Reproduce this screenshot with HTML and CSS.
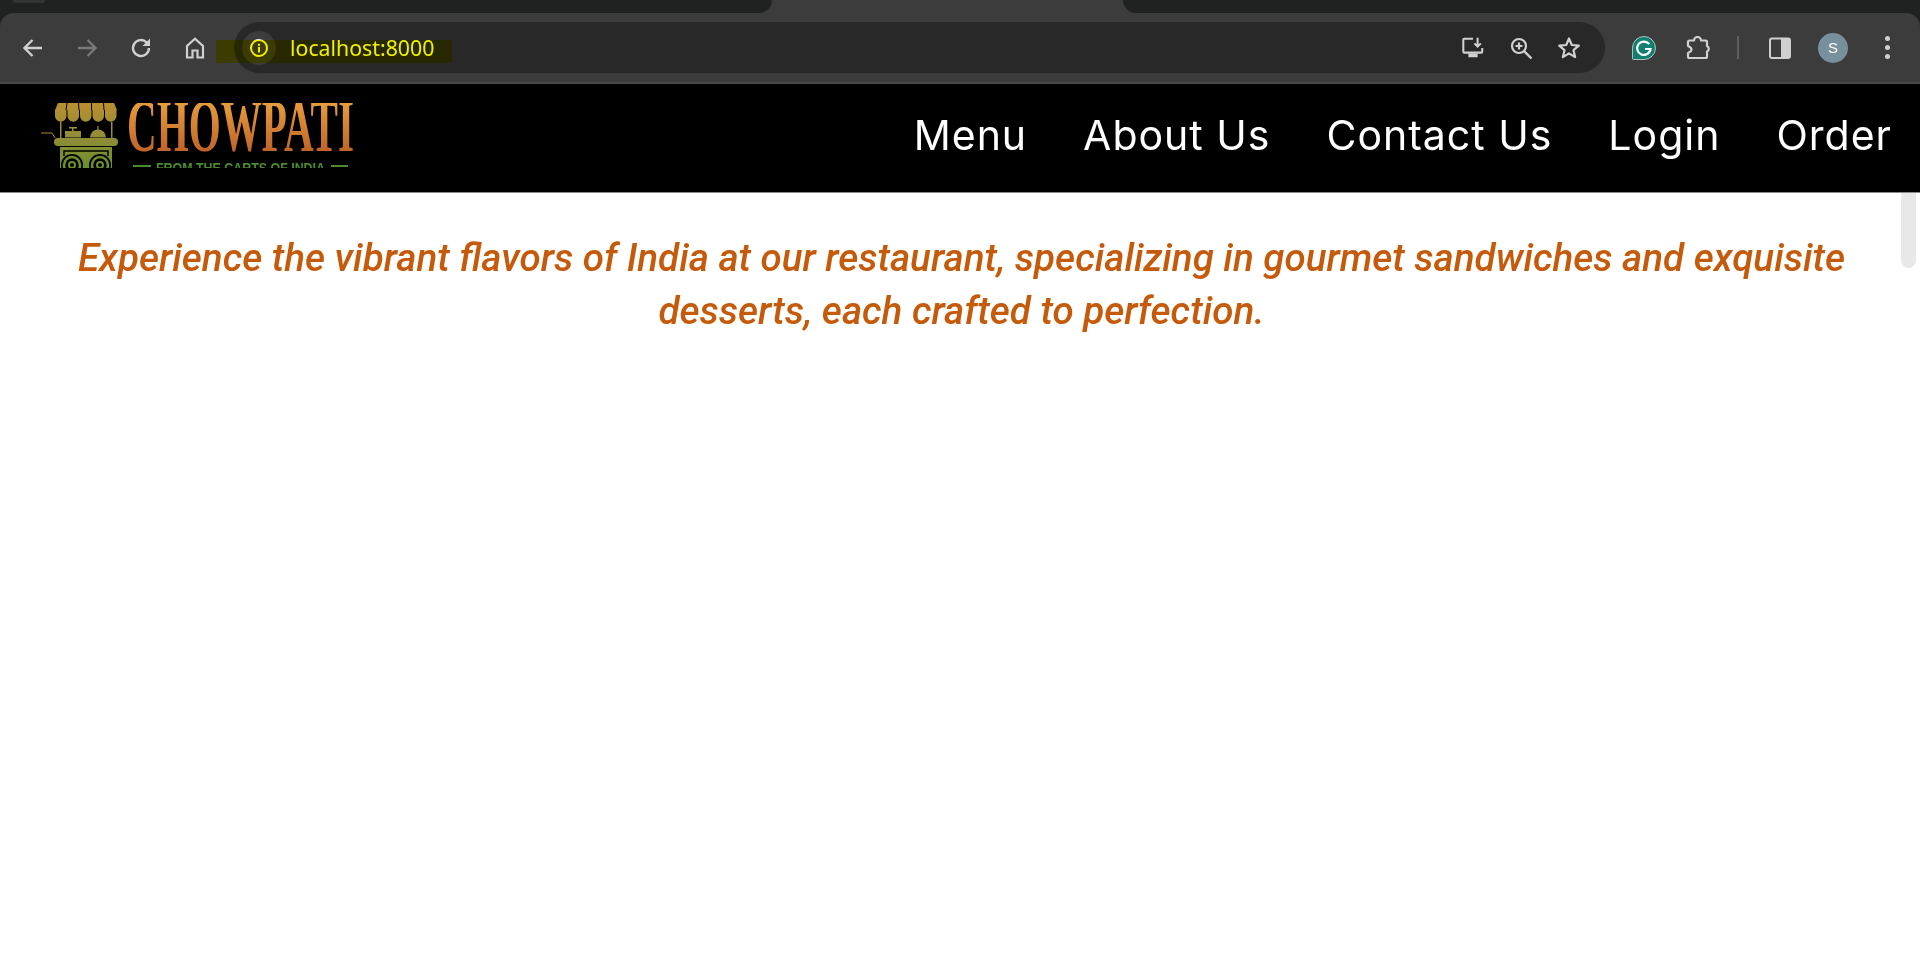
FILE: index.html
```html
<!DOCTYPE html>
<html lang="en">
<head>
    <meta charset="UTF-8">
    <title>Chowpati</title>
    <link rel="stylesheet" href="styles.css">
</head>
<body>
    <div class="browser">
        <div class="tabstrip">
            <div class="tab-left"><span class="tab-ghost"></span></div>
            <div class="tab-right"></div>
        </div>
        <div class="toolbar">
            <div class="nav-buttons">
                <svg class="icon" viewBox="0 0 24 24"><path d="M21 12H4M11.500 4L3.500 12l8 8" fill="none" stroke="#d0d0d0" stroke-width="2.400"/></svg>
                <svg class="icon" viewBox="0 0 24 24"><path d="M3 12h17M12.500 4l8 8-8 8" fill="none" stroke="#797979" stroke-width="2.400"/></svg>
                <svg class="icon" viewBox="0 0 24 24"><path d="M20 12a8 8 0 1 1-2.400-5.700L20 8.700" fill="none" stroke="#d0d0d0" stroke-width="2.400"/><path d="M21 2.500V10h-7.500z" fill="#d0d0d0"/></svg>
                <svg class="icon" viewBox="0 0 24 24"><path d="M4 21.500V10L12 2.800 20 10v11.500h-5.500v-7h-5v7z" fill="none" stroke="#d0d0d0" stroke-width="2.200"/></svg>
            </div>
            <div class="urlbar">
                <div class="chip">
                    <svg class="info" viewBox="0 0 20 20"><circle cx="10" cy="10" r="8" fill="none" stroke="#f0f0f0" stroke-width="2"/><rect x="9" y="9" width="2" height="5.500" fill="#f0f0f0"/><rect x="9" y="5.800" width="2" height="2" fill="#f0f0f0"/></svg>
                </div>
                <span class="url">localhost:8000</span>
                <div class="url-actions">
                    <svg class="icon" viewBox="0 0 26 26"><path d="M13 3H3.500a1 1 0 0 0-1 1v13a1 1 0 0 0 1 1H22a1 1 0 0 0 1-1v-4" fill="none" stroke="#d0d0d0" stroke-width="2.200"/><path d="M18 2v9M14.500 8l3.500 3.500L21.500 8" fill="none" stroke="#d0d0d0" stroke-width="2.200"/><rect x="8" y="19" width="10" height="4" fill="#d0d0d0"/></svg>
                    <svg class="icon" viewBox="0 0 24 24"><circle cx="10" cy="10" r="7" fill="none" stroke="#d0d0d0" stroke-width="2.200"/><path d="M15 15l7.500 7.500" stroke="#d0d0d0" stroke-width="2.400"/><path d="M6.500 10h7M10 6.500v7" stroke="#d0d0d0" stroke-width="2.200"/></svg>
                    <svg class="icon" viewBox="0 0 24 24"><path d="M12 2.500l2.800 6.500 7 .6-5.300 4.600 1.600 6.900-6.100-3.700-6.100 3.700 1.600-6.900-5.300-4.600 7-.6z" fill="none" stroke="#d0d0d0" stroke-width="2.200" stroke-linejoin="round"/></svg>
                </div>
            </div>
            <div class="extensions">
                <svg class="icon grammarly" viewBox="0 0 24 24"><path d="M12 .5a11.500 11.500 0 1 1 0 23H1.500a1 1 0 0 1-1-1V12A11.500 11.500 0 0 1 12 .5z" fill="#0f7f6f" stroke="#d8d8d8" stroke-width=".8"/><path d="M17.200 8.200A6.700 6.700 0 1 0 18.500 13h-5.500" fill="none" stroke="#fff" stroke-width="2.200"/></svg>
                <svg class="icon puzzle" viewBox="0 0 24 24"><path d="M2 6a1.500 1.500 0 0 1 1.500-1.500H8a3.500 3.500 0 0 1 7 0h4.500A1.500 1.500 0 0 1 21 6v4a3 3 0 0 1 0 5.500v5a1.500 1.500 0 0 1-1.500 1.500h-16A1.500 1.500 0 0 1 2 20.500V17q3.500-1.500 3.500-3.500T2 10z" fill="none" stroke="#d0d0d0" stroke-width="2.200" stroke-linejoin="round"/></svg>
                <span class="divider"></span>
                <svg class="icon panel" viewBox="0 0 24 24"><rect x="2" y="2.500" width="20" height="19.500" rx="2" fill="none" stroke="#d0d0d0" stroke-width="2"/><rect x="13" y="2.500" width="9" height="19.500" fill="#d0d0d0"/></svg>
                <span class="avatar">S</span>
                <span class="dots"><i></i><i></i><i></i></span>
            </div>
            <div class="highlight"></div>
        </div>
    </div>

    <header class="site-header">
        <svg class="logo" viewBox="0 0 316 65">
            <defs>
                <linearGradient id="cartfill" gradientUnits="userSpaceOnUse" x1="0" y1="0" x2="0" y2="65">
                    <stop offset="0" stop-color="#b98f30"/>
                    <stop offset="0.55" stop-color="#8f8c38"/>
                    <stop offset="1" stop-color="#6c8f2c"/>
                </linearGradient>
                <linearGradient id="namefill" gradientUnits="userSpaceOnUse" x1="0" y1="0" x2="0" y2="49">
                    <stop offset="0" stop-color="#e69c3c"/>
                    <stop offset="1" stop-color="#bf6329"/>
                </linearGradient>
            </defs>
            <g fill="url(#cartfill)">
                <path d="M18 0h56l3 7H15z"/>
                <path d="M15 7h11.500v6a5.750 5.750 0 0 1-11.500 0zM27.500 7H39v6a5.750 5.750 0 0 1-11.500 0zM40 7h11.500v6a5.750 5.750 0 0 1-11.500 0zM52.500 7H64v6a5.750 5.750 0 0 1-11.500 0zM65 7h11.500v6a5.750 5.750 0 0 1-11.500 0z"/>
                <rect x="20" y="19" width="1.500" height="17"/>
                <rect x="71" y="19" width="1.500" height="17"/>
                <rect x="25" y="28" width="16" height="6.500"/>
                <rect x="29" y="24" width="8" height="1.500"/>
                <rect x="32" y="24" width="1.500" height="5"/>
                <path d="M50 34.500a8 8 0 0 1 16 0z"/>
                <rect x="57.300" y="23" width="1.200" height="4"/>
                <rect x="14" y="35" width="64" height="8" rx="4"/>
                <rect x="20" y="44" width="52" height="21"/>
            </g>
            <path d="M26 7L27 0M39 7L38.500 0M51.500 7L51.500 0M64 7L63.500 0" stroke="#000" stroke-width="1"/>
            <path d="M1 30h11l3 5" fill="none" stroke="#a58b35" stroke-width="1"/>
            <path d="M24 53v-5h44v5" fill="none" stroke="#000" stroke-width="1.500"/>
            <circle cx="32" cy="62" r="11" fill="#000"/>
            <circle cx="60" cy="62" r="11" fill="#000"/>
            <g fill="none" stroke="#6f8f2d">
                <circle cx="32" cy="62" r="8" stroke-width="2.500"/>
                <circle cx="60" cy="62" r="8" stroke-width="2.500"/>
                <circle cx="32" cy="62" r="3" stroke-width="2"/>
                <circle cx="60" cy="62" r="3" stroke-width="2"/>
            </g>
            <text class="brand-name" x="87" y="48" fill="url(#namefill)" textLength="227" lengthAdjust="spacingAndGlyphs">CHOWPATI</text>
            <rect x="93" y="62" width="18" height="2" fill="#4c8b2b"/>
            <rect x="291" y="62" width="17" height="2" fill="#4c8b2b"/>
            <text class="tagline" x="116" y="70" textLength="169" lengthAdjust="spacingAndGlyphs">FROM THE CARTS OF INDIA</text>
        </svg>
        <nav class="site-nav">
            <a href="#">Menu</a>
            <a href="#">About Us</a>
            <a href="#">Contact Us</a>
            <a href="#">Login</a>
            <a href="#">Order</a>
        </nav>
    </header>

    <div class="page">
        <main class="content">
            <p class="intro">Experience the vibrant flavors of India at our restaurant, specializing in gourmet sandwiches and exquisite desserts, each crafted to perfection.</p>
        </main>
        <div class="scrollbar"><div class="thumb"></div></div>
    </div>
</body>
</html>
```

FILE: styles.css
```css
html, body {
    margin: 0;
    height: 958px;
    overflow: hidden;
    background: #fff;
}
.browser {
    background: #202221;
}
.tabstrip {
    display: flex;
    justify-content: space-between;
    height: 13px;
    background: #3c3c3c;
}
.tab-left {
    width: 772px;
    background: #202221;
    border-bottom-right-radius: 14px;
}
.tab-ghost {
    display: block;
    width: 32px;
    height: 3px;
    margin-left: 13px;
    background: #333;
    border-radius: 0 0 14px 14px;
}
.tab-right {
    width: 797px;
    background: #202221;
    border-bottom-left-radius: 14px;
}
.toolbar {
    position: relative;
    display: flex;
    align-items: center;
    height: 69px;
    padding-bottom: 2px;
    background: #3c3c3c;
    border-radius: 14px 14px 0 0;
    box-shadow: inset 0 -2px 0 #4a4a4a;
}
.icon {
    width: 24px;
    height: 24px;
    flex: none;
}
.nav-buttons {
    display: flex;
    gap: 30px;
    margin-left: 21px;
}
.urlbar {
    display: flex;
    align-items: center;
    width: 1371px;
    height: 51px;
    margin-left: 27px;
    background: #282828;
    border-radius: 26px;
}
.chip {
    display: flex;
    align-items: center;
    justify-content: center;
    width: 34px;
    height: 34px;
    margin-left: 8px;
    background: #3c3c3c;
    border-radius: 50%;
}
.info {
    width: 20px;
    height: 20px;
}
.url {
    margin-left: 14px;
    font-family: "Noto Sans", sans-serif;
    font-size: 21.300px;
    color: #f0f0f0;
}
.url-actions {
    display: flex;
    gap: 24px;
    margin-left: auto;
    margin-right: 24px;
}
.extensions {
    display: flex;
    align-items: center;
    margin-left: 27px;
}
.puzzle {
    margin-left: 30px;
}
.divider {
    width: 2px;
    height: 23px;
    margin-left: 27px;
    background: #5f5f5f;
}
.panel {
    margin-left: 29px;
}
.avatar {
    width: 30px;
    height: 30px;
    margin-left: 26px;
    background: #78909c;
    border-radius: 50%;
    color: #fff;
    font-family: "Liberation Sans", sans-serif;
    font-size: 15px;
    line-height: 30px;
    text-align: center;
}
.dots {
    display: flex;
    flex-direction: column;
    gap: 4px;
    margin-left: 37px;
}
.dots i {
    width: 5px;
    height: 5px;
    background: #d0d0d0;
    border-radius: 50%;
}
/* text marker on the address */
.highlight {
    position: absolute;
    left: 216px;
    top: 27px;
    width: 236px;
    height: 23px;
    background: #ffff00;
    mix-blend-mode: multiply;
}
.site-header {
    display: flex;
    justify-content: space-between;
    align-items: center;
    height: 108px;
    background: #000;
    border-bottom: 1px solid #8a8a8a;
}
.logo {
    align-self: flex-start;
    width: 316px;
    height: 65px;
    margin-left: 40px;
    margin-top: 19px;
}
.brand-name {
    font-family: "Liberation Serif", serif;
    font-size: 74px;
    font-weight: bold;
}
.tagline {
    fill: #4c8b2b;
    font-family: "Liberation Sans", sans-serif;
    font-size: 15px;
    font-weight: bold;
}
.site-nav {
    display: flex;
    gap: 56px;
    margin-right: 28px;
    padding-bottom: 6px;
}
.site-nav a {
    color: #fff;
    font-family: Inter, sans-serif;
    font-size: 41px;
    letter-spacing: 1px;
    text-decoration: none;
}
.page {
    display: flex;
    height: 765px;
}
.content {
    flex: 1;
    padding: 0 9px 0 31px;
}
.intro {
    margin: 38px 0 0;
    color: #c55a0b;
    font-family: Roboto, sans-serif;
    font-size: 38.600px;
    font-style: italic;
    font-weight: 500;
    line-height: 53px;
    text-align: center;
}
.scrollbar {
    width: 15px;
    margin-right: 4px;
}
.thumb {
    height: 75px;
    background: #e8e8e8;
    border-radius: 0 0 8px 8px;
}
```
